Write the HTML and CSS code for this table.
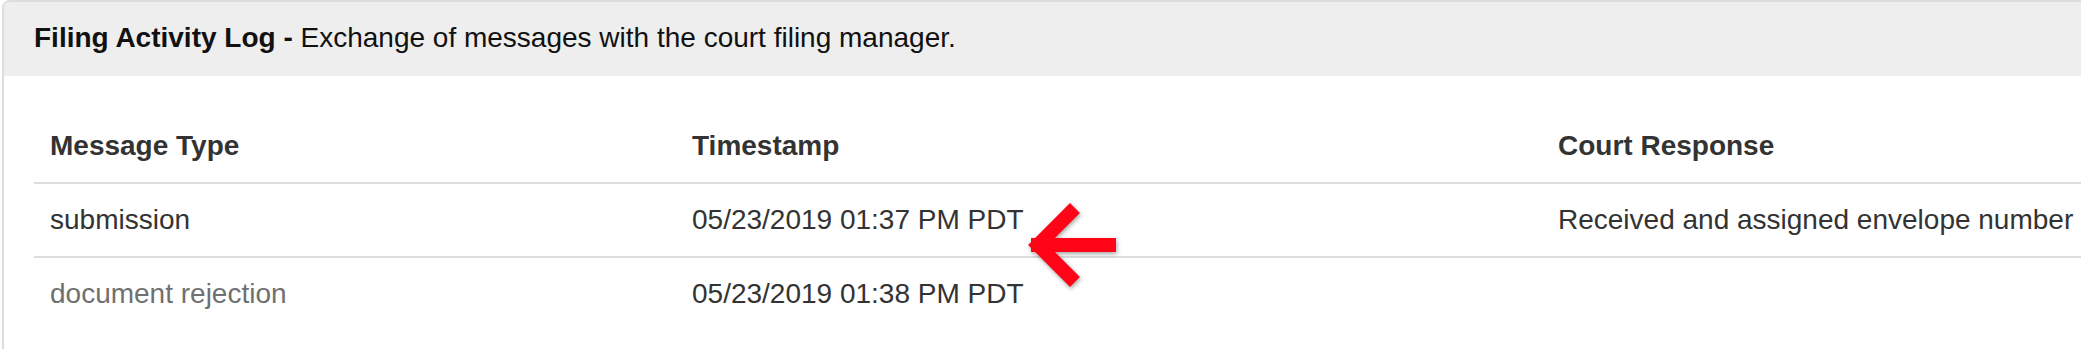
FILE: index.html
```html
<!DOCTYPE html>
<html lang="en">
<head>
<meta charset="utf-8">
<title>Filing Activity Log</title>
<link rel="stylesheet" href="styles.css">
</head>
<body>
<div class="panel">
  <div class="panel-heading"><strong>Filing Activity Log -</strong> Exchange of messages with the court filing manager.</div>
  <div class="panel-body">
    <table class="log">
      <colgroup>
        <col class="c-type">
        <col class="c-time">
        <col class="c-resp">
      </colgroup>
      <thead>
        <tr><th>Message Type</th><th>Timestamp</th><th>Court Response</th></tr>
      </thead>
      <tbody>
        <tr><td>submission</td><td>05/23/2019 01:37 PM PDT</td><td>Received and assigned envelope number</td></tr>
        <tr><td class="muted">document rejection</td><td>05/23/2019 01:38 PM PDT</td><td></td></tr>
      </tbody>
    </table>
  </div>
</div>
<svg class="arrow" width="110" height="105" viewBox="0 0 110 105" aria-hidden="true">
  <path d="M50 18 L18 50 L50 82 M18 50 L89 50" fill="none" stroke="#fe0416" stroke-width="14" stroke-linecap="square" stroke-linejoin="miter"/>
</svg>
</body>
</html>
```
FILE: styles.css
```css
html, body {
  margin: 0;
  padding: 0;
  background: #fff;
  overflow: hidden;
}
body {
  font-family: "Liberation Sans", Arial, Helvetica, sans-serif;
  font-size: 28px;
  line-height: 40px;
  color: #333;
  position: relative;
  width: 2081px;
  height: 349px;
}
.panel {
  margin-left: 2px;
  width: 2240px;
  border: 2px solid #ddd;
  border-radius: 8px;
  background: #fff;
}
.panel-heading {
  background: #eee;
  color: #111;
  padding: 16px 30px 18px;
  border-radius: 6px 6px 0 0;
  white-space: nowrap;
}
.panel-heading strong {
  font-weight: bold;
}
.panel-body {
  padding: 34px 30px 30px;
}
.log {
  width: 100%;
  border-collapse: collapse;
  table-layout: fixed;
}
.c-type { width: 642px; }
.c-time { width: 866px; }
.log th,
.log td {
  text-align: left;
  padding: 16px;
  white-space: nowrap;
  vertical-align: top;
}
.log th {
  font-weight: bold;
  border-bottom: 2px solid #ddd;
}
.log tbody tr + tr td {
  border-top: 2px solid #ddd;
}
.log td.muted {
  color: #707070;
}
.arrow {
  position: absolute;
  left: 1020px;
  top: 195px;
  filter: drop-shadow(1px 2px 2px rgba(0, 0, 0, 0.35));
}
```
